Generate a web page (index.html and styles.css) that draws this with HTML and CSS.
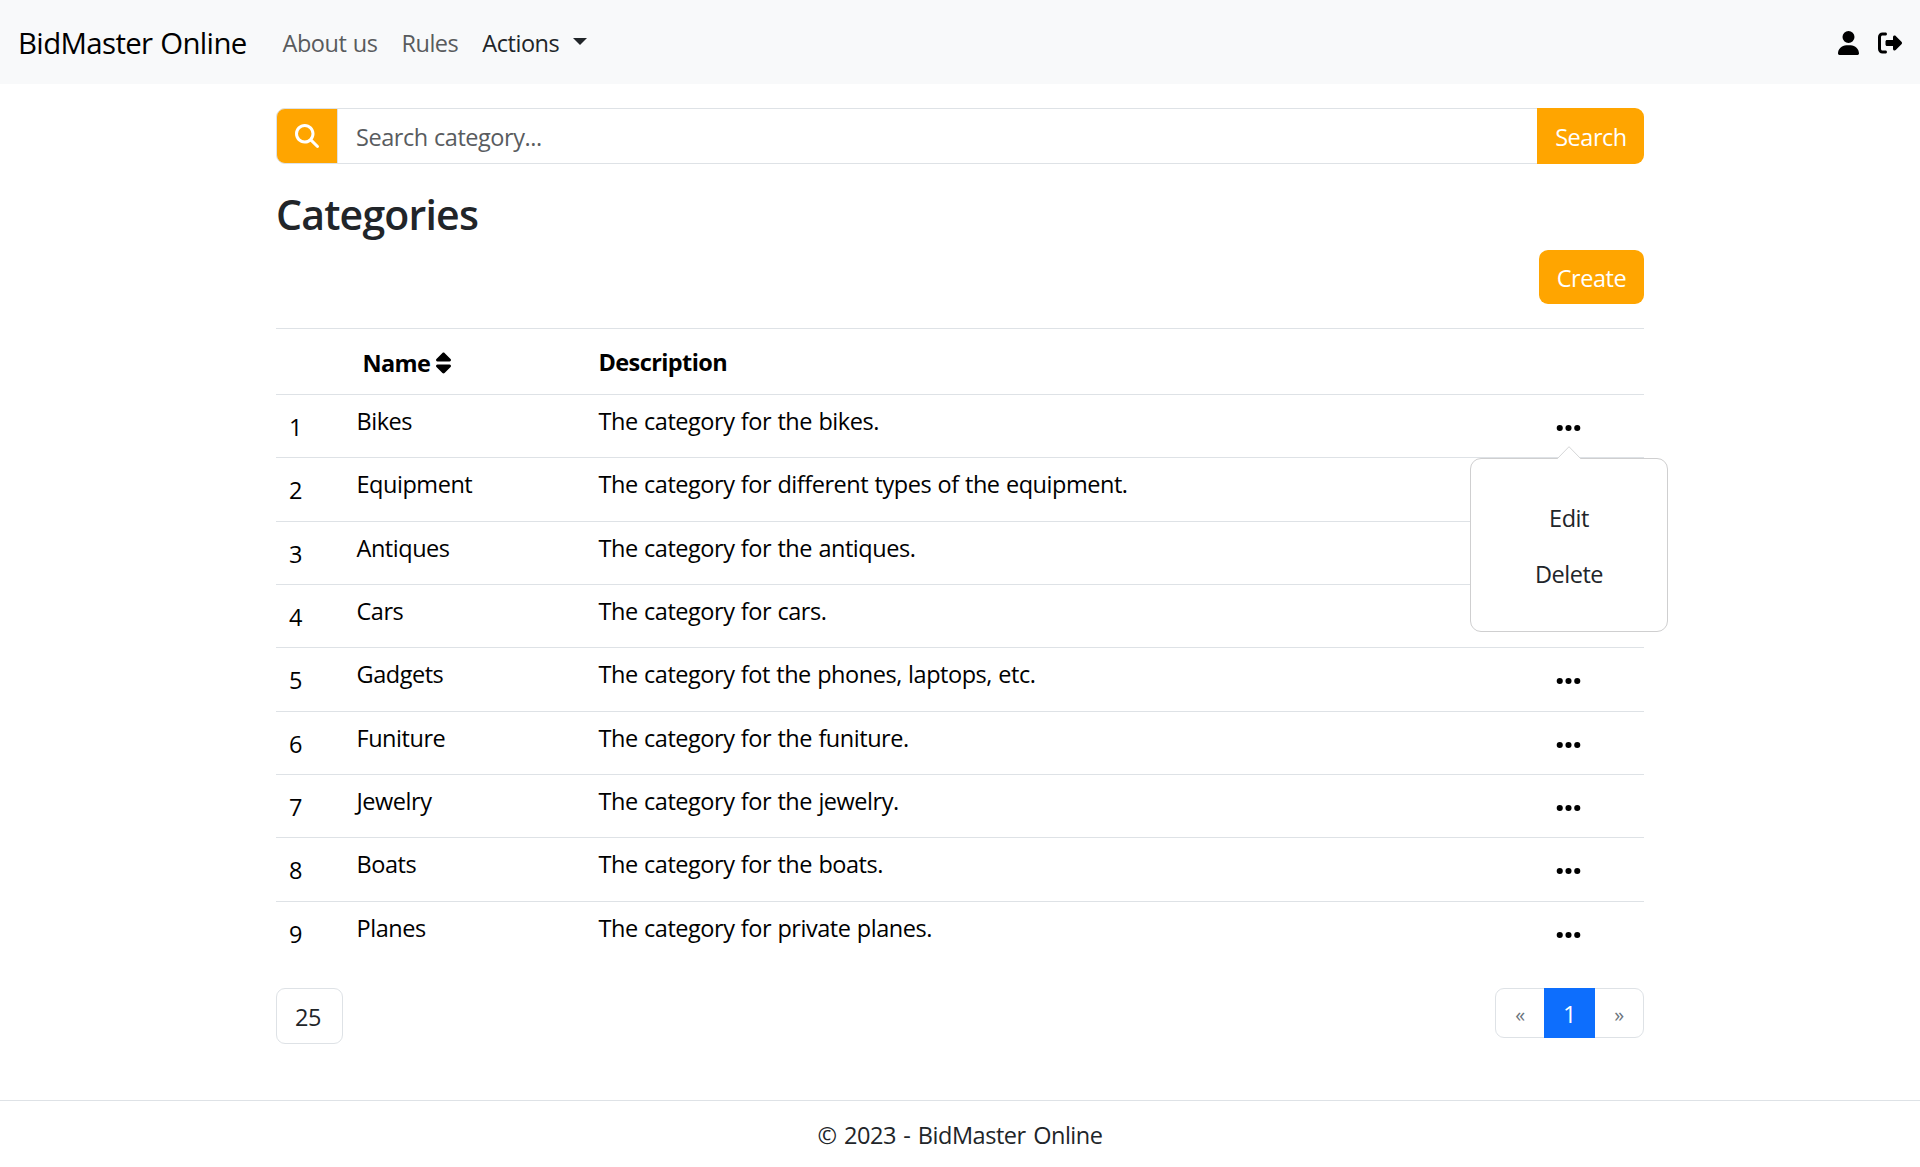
FILE: index.html
```html
<!DOCTYPE html>
<html lang="en">
<head>
<meta charset="utf-8">
<title>Categories - BidMaster Online</title>
<link rel="stylesheet" href="styles.css">
</head>
<body>
<svg class="sprite" aria-hidden="true">
  <symbol id="dots" viewBox="0 0 448 512"><path d="M8 256a56 56 0 1 1 112 0A56 56 0 1 1 8 256zm160 0a56 56 0 1 1 112 0 56 56 0 1 1-112 0zm216-56a56 56 0 1 1 0 112 56 56 0 1 1 0-112z"/></symbol>
</svg>
<header class="navbar">
  <a class="brand">BidMaster Online</a>
  <nav class="nav">
    <a>About us</a>
    <a>Rules</a>
    <a class="active">Actions<span class="caret"></span></a>
  </nav>
  <div class="account">
    <svg class="user" viewBox="0 0 448 512"><path d="M224 256A128 128 0 1 0 224 0a128 128 0 1 0 0 256zm-45.700 48C79.800 304 0 383.800 0 482.300C0 498.700 13.300 512 29.700 512H418.300c16.400 0 29.700-13.300 29.700-29.700C448 383.800 368.200 304 269.700 304H178.300z"/></svg>
    <svg class="logout" viewBox="0 0 512 512"><path d="M377.900 105.900L500.700 228.700c7.200 7.200 11.300 17.100 11.300 27.300s-4.100 20.100-11.300 27.300L377.900 406.100c-6.400 6.400-15 9.900-24 9.900c-18.700 0-33.900-15.200-33.900-33.900l0-62.100-128 0c-17.700 0-32-14.300-32-32l0-64c0-17.700 14.300-32 32-32l128 0 0-62.100c0-18.700 15.200-33.900 33.900-33.900c9 0 17.600 3.600 24 9.900zM160 96L96 96c-17.700 0-32 14.300-32 32l0 256c0 17.700 14.300 32 32 32l64 0c17.700 0 32 14.300 32 32s-14.300 32-32 32l-64 0c-53 0-96-43-96-96L0 128C0 75 43 32 96 32l64 0c17.700 0 32 14.300 32 32s-14.300 32-32 32z"/></svg>
  </div>
</header>
<main class="container">
  <form class="search">
    <span class="search-icon"><svg viewBox="0 0 512 512"><path d="M416 208c0 45.900-14.900 88.300-40 122.700L502.600 457.400c12.500 12.500 12.500 32.800 0 45.300s-32.800 12.500-45.300 0L330.700 376c-34.400 25.200-76.800 40-122.700 40C93.100 416 0 322.900 0 208S93.100 0 208 0S416 93.100 416 208zM208 352a144 144 0 1 0 0-288 144 144 0 1 0 0 288z"/></svg></span>
    <span class="search-input">Search category...</span>
    <a class="btn btn-search">Search</a>
  </form>
  <h2>Categories</h2>
  <div class="toolbar"><a class="btn btn-create">Create</a></div>
  <section class="table">
    <div class="row head"><span></span><span class="name">Name<svg viewBox="0 0 320 512"><path d="M137.400 41.400c12.500-12.500 32.800-12.500 45.300 0l128 128c9.200 9.200 11.900 22.900 6.900 34.900s-16.600 19.800-29.600 19.800H32c-12.900 0-24.600-7.800-29.600-19.800s-2.200-25.700 6.900-34.900l128-128zm0 429.300l-128-128c-9.200-9.200-11.900-22.900-6.900-34.900s16.600-19.800 29.600-19.800H288c12.900 0 24.600 7.800 29.600 19.800s2.200 25.700-6.900 34.900l-128 128c-12.500 12.500-32.800 12.500-45.300 0z"/></svg></span><span>Description</span></div>
    <div class="row"><span class="num">1</span><span>Bikes</span><span>The category for the bikes.</span>
      <span class="more"><svg><use href="#dots"/></svg>
        <span class="popover"><svg class="arrow" viewBox="0 0 24 13"><path d="M0 13L12 .700L24 13"/></svg><a>Edit</a><a>Delete</a></span>
      </span></div>
    <div class="row"><span class="num">2</span><span>Equipment</span><span>The category for different types of the equipment.</span></div>
    <div class="row"><span class="num">3</span><span>Antiques</span><span>The category for the antiques.</span></div>
    <div class="row"><span class="num">4</span><span>Cars</span><span>The category for cars.</span></div>
    <div class="row"><span class="num">5</span><span>Gadgets</span><span>The category fot the phones, laptops, etc.</span><span class="more"><svg><use href="#dots"/></svg></span></div>
    <div class="row"><span class="num">6</span><span>Funiture</span><span>The category for the funiture.</span><span class="more"><svg><use href="#dots"/></svg></span></div>
    <div class="row"><span class="num">7</span><span>Jewelry</span><span>The category for the jewelry.</span><span class="more"><svg><use href="#dots"/></svg></span></div>
    <div class="row"><span class="num">8</span><span>Boats</span><span>The category for the boats.</span><span class="more"><svg><use href="#dots"/></svg></span></div>
    <div class="row"><span class="num">9</span><span>Planes</span><span>The category for private planes.</span><span class="more"><svg><use href="#dots"/></svg></span></div>
  </section>
  <div class="pager">
    <span class="page-size">25</span>
    <div class="pages"><a class="step">«</a><a class="current">1</a><a class="step">»</a></div>
  </div>
</main>
<footer>© 2023 - BidMaster Online</footer>
</body>
</html>
```
FILE: styles.css
```css
* { box-sizing: border-box; }

body {
  margin: 0;
  height: 1167px;
  display: flex;
  flex-direction: column;
  overflow: hidden;
  background: #fff;
  color: #212529;
  font: 23.5px/36px "Open Sans", "Noto Sans", sans-serif;
  letter-spacing: -0.46px;
  word-spacing: 0.7px;
}

.sprite { display: none; }

.navbar {
  flex: none;
  height: 84px;
  padding: 2px 18px 0;
  display: flex;
  align-items: center;
  background: #f8f9fa;
}

.brand {
  width: 264.500px;
  padding-bottom: 1px;
  color: #000;
  font-size: 29.4px;
  letter-spacing: -0.63px;
}

.nav { display: flex; gap: 24px; color: #595b5d; }
.nav .active { color: #212529; display: flex; align-items: center; }

.caret {
  margin: 0 0 3px 14px;
  border: 7px solid transparent;
  border-top-color: currentColor;
  border-bottom: 0;
}

.account { margin-left: auto; display: flex; align-items: center; gap: 19px; }
.account svg { height: 24px; fill: #000; }
.user { width: 21px; }
.logout { width: 24px; }

.container { width: 1368px; margin: 24px auto 0; flex: 1; }

.search { height: 56px; display: flex; }

.search-icon {
  width: 62px;
  display: flex;
  align-items: center;
  justify-content: center;
  background: orange;
  border: 1px solid #dee2e6;
  border-radius: 9px 0 0 9px;
}
.search-icon svg { width: 24px; height: 24px; fill: #fff; }

.search-input {
  flex: 1;
  padding: 10px 18px;
  border: 1px solid #dee2e6;
  border-width: 1px 0;
  color: #595c5f;
}

.btn { background: orange; color: #fff; text-align: center; }
.btn-search { width: 107px; padding: 11px 0 0 1px; border-radius: 0 9px 9px 0; }
.btn-create { width: 105px; height: 54px; padding-top: 10px; border-radius: 9px; }

h2 {
  margin: 25px 0 11px;
  font-size: 41px;
  font-weight: 600;
  line-height: 50px;
  letter-spacing: -0.8px;
}

.toolbar { height: 78px; display: flex; justify-content: flex-end; }

.table { color: #000; }

.row {
  height: 63.375px;
  padding-top: 8px;
  display: grid;
  grid-template-columns: 80.5px 242px 927.5px 1fr;
  border-top: 1px solid #dee2e6;
}
.head { height: 65.8px; padding-top: 15px; font-weight: 700; letter-spacing: -0.6px; }
.name { height: 38px; padding-left: 6px; display: flex; align-items: center; }
.name svg { width: 15px; height: 24px; margin: 0 0 1px 5.5px; }
.num { padding: 6px 0 0 13px; }

.more { position: relative; width: 92px; padding-left: 26px; }
.more > svg { width: 33px; height: 28px; display: block; margin-top: 11px; }

.popover {
  position: absolute;
  left: -56px;
  top: 55px;
  z-index: 1;
  width: 198px;
  height: 174px;
  padding-top: 41px;
  display: flex;
  flex-direction: column;
  align-items: center;
  gap: 20px;
  background: #fff;
  border: 1px solid #cfcfd0;
  border-radius: 11px;
  color: #212529;
}

.arrow { position: absolute; top: -13px; left: 86px; width: 24px; height: 13px; fill: #fff; stroke: #d5d6d7; }

.pager { margin-top: 23.8px; display: flex; justify-content: space-between; align-items: flex-start; }

.page-size {
  width: 67px;
  height: 56px;
  padding: 10px 0 0 18px;
  border: 1px solid #dee2e6;
  border-radius: 9px;
}

.pages {
  width: 149px;
  height: 50px;
  display: flex;
  border: 1px solid #dee2e6;
  border-radius: 9px;
  text-align: center;
}
.step { flex: 1; padding-top: 8px; color: #6c757d; font-size: 20px; }
.current { width: 51px; margin: -1px 0; padding-top: 8px; background: #0d6efd; color: #fff; }

footer {
  flex: none;
  height: 67px;
  padding-top: 16px;
  border-top: 1px solid #dee2e6;
  text-align: center;
  letter-spacing: -0.47px;
  word-spacing: 1.8px;
}
```
